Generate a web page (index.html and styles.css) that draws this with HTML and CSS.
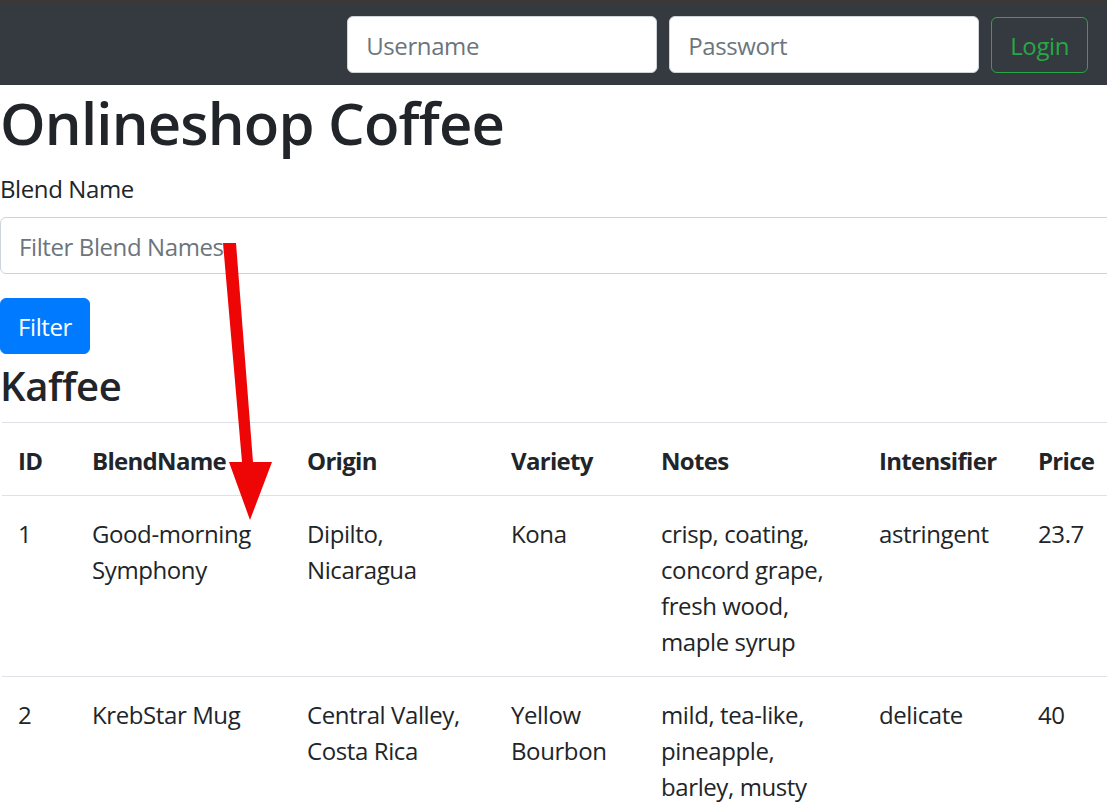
FILE: index.html
```html
<!DOCTYPE html>
<html lang="de">
<head>
<meta charset="utf-8">
<title>Onlineshop Coffee</title>
<link rel="stylesheet" href="styles.css">
</head>
<body>
<nav class="navbar">
  <form class="login-form">
    <input class="form-control nav-input" type="text" placeholder="Username">
    <input class="form-control nav-input" type="password" placeholder="Passwort">
    <button class="btn btn-outline-success" type="button">Login</button>
  </form>
</nav>
<main class="content">
  <h1 class="title">Onlineshop Coffee</h1>
  <div class="form-group">
    <label class="label" for="blend">Blend Name</label>
    <input id="blend" class="form-control filter-input" type="text" placeholder="Filter Blend Names">
  </div>
  <button class="btn btn-primary" type="button">Filter</button>
  <h2 class="subtitle">Kaffee</h2>
  <table class="table">
    <thead>
      <tr>
        <th class="c-id">ID</th>
        <th class="c-name">BlendName</th>
        <th class="c-origin">Origin</th>
        <th class="c-variety">Variety</th>
        <th class="c-notes">Notes</th>
        <th class="c-int">Intensifier</th>
        <th class="c-price">Price</th>
      </tr>
    </thead>
    <tbody>
      <tr>
        <td>1</td>
        <td>Good-morning Symphony</td>
        <td>Dipilto, Nicaragua</td>
        <td>Kona</td>
        <td>crisp, coating, concord grape, fresh wood, maple syrup</td>
        <td>astringent</td>
        <td>23.7</td>
      </tr>
      <tr>
        <td>2</td>
        <td>KrebStar Mug</td>
        <td>Central Valley, Costa Rica</td>
        <td>Yellow Bourbon</td>
        <td>mild, tea-like, pineapple, barley, musty</td>
        <td>delicate</td>
        <td>40</td>
      </tr>
    </tbody>
  </table>
  <svg class="arrow" width="300" height="450" viewBox="0 0 300 450" aria-hidden="true">
    <polygon points="223,158 236,158 253,377 272,377 250,435 229,377 242,377" fill="#ee0505"/>
  </svg>
</main>
</body>
</html>
```

FILE: styles.css
```css
* { box-sizing: border-box; }

html, body {
  margin: 0;
  padding: 0;
  overflow: hidden;
}

body {
  font-family: "Open Sans", "Noto Sans", sans-serif;
  font-size: 24px;
  line-height: 1.5;
  letter-spacing: -0.4px;
  color: #212529;
  background: #fff;
  width: 1107px;
  height: 802px;
}

.navbar {
  height: 85px;
  background: #343a40;
  border-top: 3px solid #3a3937;
  display: flex;
  align-items: center;
  justify-content: flex-end;
  padding: 0 19px 0 0;
}

.login-form {
  display: flex;
  align-items: center;
  margin-top: 1px;
}

.form-control {
  font-family: inherit;
  font-size: 24px;
  line-height: 1.5;
  letter-spacing: -0.4px;
  color: #495057;
  background: #fff;
  border: 1.5px solid #ced4da;
  border-radius: 6px;
  padding: 2px 18px 0;
  height: 57px;
  outline: none;
}

.form-control::placeholder { color: #6c757d; }

.nav-input {
  width: 310px;
  margin-right: 12px;
}

.btn {
  font-family: inherit;
  font-size: 24px;
  line-height: 1.5;
  letter-spacing: -0.4px;
  border-radius: 6px;
  border: 1.5px solid transparent;
  cursor: pointer;
}

.btn-outline-success {
  color: #28a745;
  background: transparent;
  border-color: #28a745;
  height: 56px;
  padding: 2px 18px 0;
}

.btn-primary {
  color: #fff;
  background: #007bff;
  border-color: #007bff;
  height: 56px;
  padding: 2px 17px 0;
  display: block;
}

.content {
  position: relative;
}

.title {
  font-size: 58px;
  font-weight: 600;
  line-height: 72px;
  margin: 0 0 12px;
  padding-top: 2px;
  height: 72px;
  letter-spacing: -0.8px;
}

.form-group {
  margin-bottom: 24px;
}

.label {
  display: block;
  padding-top: 2px;
  height: 36px;
  margin-bottom: 12px;
}

.filter-input {
  display: block;
  width: 1140px;
}

.subtitle {
  font-size: 40px;
  font-weight: 600;
  line-height: 58px;
  height: 58px;
  padding-top: 3px;
  margin: 0 0 10px;
  letter-spacing: -0.4px;
}

.table {
  border-collapse: collapse;
  table-layout: fixed;
  width: 1130px;
  margin-left: 2px;
}

.table th,
.table td {
  padding: 20px 16px 16px;
  text-align: left;
  vertical-align: top;
  border-top: 1.5px solid #dee2e6;
}

.table thead th {
  font-weight: 700;
  letter-spacing: -0.7px;
  border-bottom: 1.5px solid #dee2e6;
}

.c-id { width: 74px; }
.c-name { width: 215px; }
.c-origin { width: 204px; }
.c-variety { width: 150px; }
.c-notes { width: 218px; }
.c-int { width: 159px; }
.c-price { width: 110px; }

.arrow {
  position: absolute;
  left: 0;
  top: 0;
}
```
